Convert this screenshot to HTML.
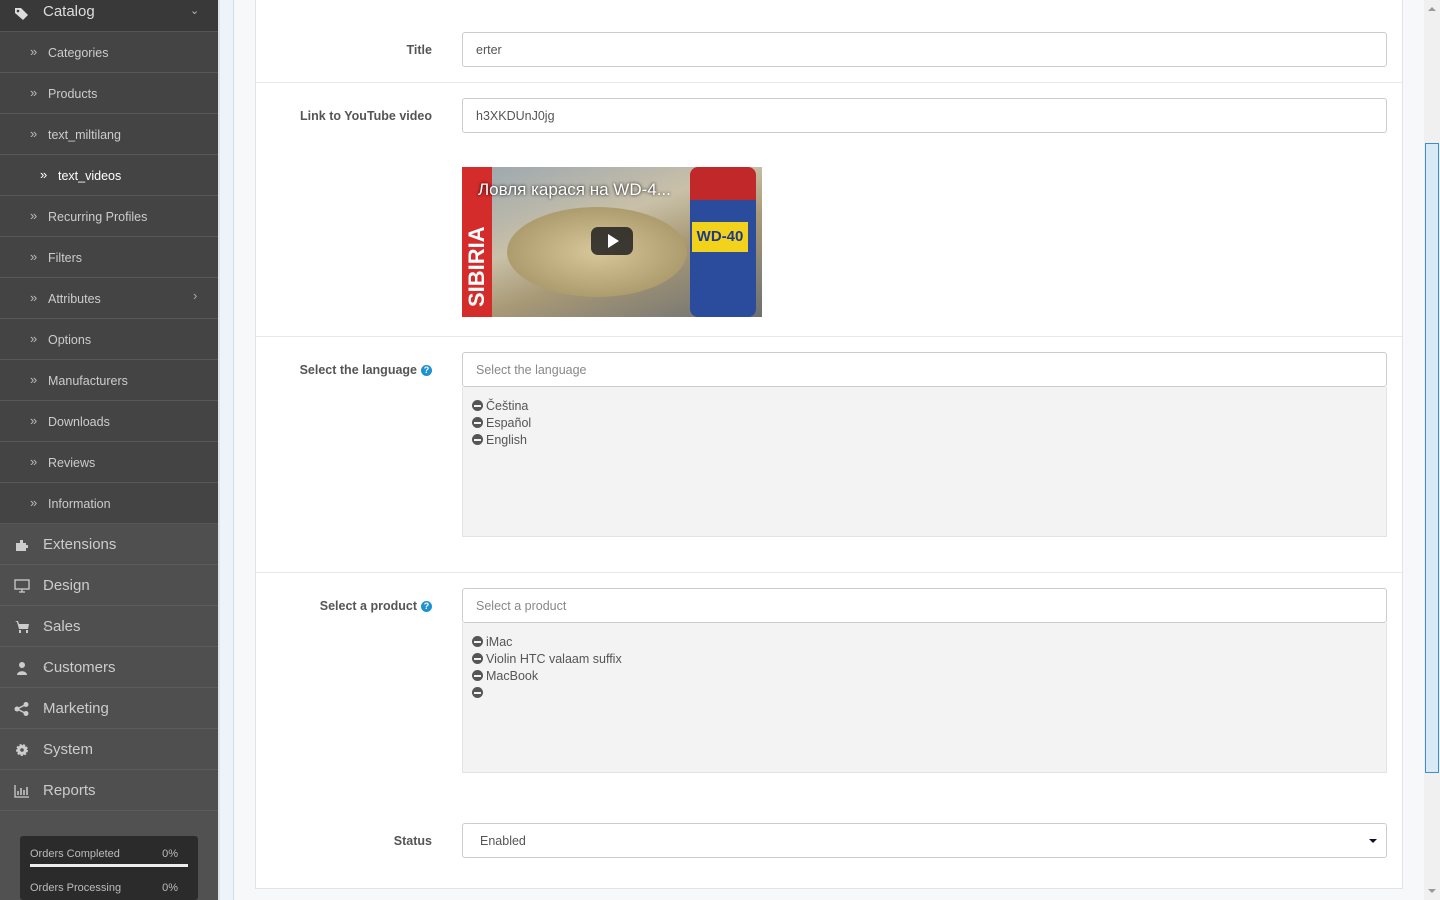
<!DOCTYPE html>
<html><head><meta charset="utf-8"><style>
*{margin:0;padding:0;box-sizing:border-box}
html,body{width:1440px;height:900px;overflow:hidden}
body{background:#f6f8fa;font-family:"Liberation Sans",sans-serif;position:relative}
#side{position:absolute;left:0;top:0;width:218px;height:900px;background:#515151;overflow:hidden}
.hd{height:32px;background:#393939;color:#ddd;font-size:15px;position:relative;border-bottom:1px solid #555}
.hd span{position:absolute;left:43px;top:3px}
.sub{height:41px;background:#444;border-bottom:1px solid #575757;color:#ccc;font-size:12.5px;position:relative}
.sub span{position:absolute;left:48px;top:14px}
.sub i{position:absolute;left:30px;top:12px;font-style:normal;font-size:13px;color:#bbb}
.sub.a span{left:58px;color:#fff}.sub.a i{left:40px;color:#fff}
.main{height:41px;background:#4f4f4f;border-bottom:1px solid #5c5c5c;color:#ccc;font-size:15px;position:relative}
.main span{position:absolute;left:43px;top:12px}
.chev{position:absolute;left:193px;top:12px;color:#aaa;font-size:13px}
.ic{position:absolute;left:14px;top:14px;width:16px;height:14px}
.box{position:absolute;left:20px;top:836px;width:178px;height:64px;background:#2b2b2b;border-radius:3px}
.box div{color:#bbb;font-size:11px;position:absolute;left:10px}
.box b{font-weight:normal;position:absolute;right:10px}
#strip{position:absolute;left:218px;top:0;width:16px;height:900px;background:#eef3f9;border-left:2px solid #dfe3e8;border-right:1px solid #d5dce4}
#panel{position:absolute;left:255px;top:0;width:1148px;height:889px;background:#fff;border:1px solid #e3e3e3;border-top:none}
.row{position:absolute;left:0;width:1146px;border-bottom:1px solid #e8e8e8}
.lab{position:absolute;right:970px;font-weight:bold;font-size:12.5px;color:#555;text-align:right;white-space:nowrap}
.inp{position:absolute;left:206px;width:925px;height:35px;border:1px solid #ccc;border-radius:3px;background:#fff;font-size:12.5px;color:#555;padding:10px 13px}
.ph{color:#888}
.well{position:absolute;left:206px;width:925px;background:#f3f3f3;border:1px solid #e3e3e3;border-top:none;font-size:12.5px;color:#555;padding:11px 9px;line-height:17px}
.m{display:inline-block;width:11px;height:11px;border-radius:50%;background:#555;position:relative;top:1px;margin-right:3px}
.m:after{content:"";position:absolute;left:2px;top:4.5px;width:7px;height:2px;background:#f3f3f3}
.q{display:inline-block;width:11px;height:11px;border-radius:50%;background:#1e91cf;color:#fff;font-size:9px;text-align:center;line-height:11px;margin-left:4px;vertical-align:1px}
#sb{position:absolute;left:1424px;top:0;width:16px;height:900px;background:#f0f0f0}
#thumb{position:absolute;left:1425px;top:143px;width:14px;height:630px;background:#d9eaf7;border:1px solid #3b8fd1;z-index:5}
</style></head><body>
<div id="side">
<div class="hd"><svg class="ic" style="top:7px" viewBox="0 0 16 14"><path d="M1 1h6l7 7-5 5-8-7z" fill="#ddd"/><circle cx="4" cy="4" r="1.3" fill="#393939"/></svg><span>Catalog</span><span style="left:190px;top:4px;font-size:11px;color:#bbb">&#8964;</span></div>
<div class="sub"><i>»</i><span>Categories</span></div>
<div class="sub"><i>»</i><span>Products</span></div>
<div class="sub"><i>»</i><span>text_miltilang</span></div>
<div class="sub a"><i>»</i><span>text_videos</span></div>
<div class="sub"><i>»</i><span>Recurring Profiles</span></div>
<div class="sub"><i>»</i><span>Filters</span></div>
<div class="sub"><i>»</i><span>Attributes</span><b class="chev" style="top:10px;font-weight:normal">›</b></div>
<div class="sub"><i>»</i><span>Options</span></div>
<div class="sub"><i>»</i><span>Manufacturers</span></div>
<div class="sub"><i>»</i><span>Downloads</span></div>
<div class="sub"><i>»</i><span>Reviews</span></div>
<div class="sub"><i>»</i><span>Information</span></div>
<div class="main"><svg class="ic" viewBox="0 0 16 14"><path d="M2 5h4V2h3v3h3v2h2v3h-2v3H2z" fill="#ccc"/></svg><span>Extensions</span><span class="chev">›</span></div>
<div class="main"><svg class="ic" viewBox="0 0 16 14"><rect x="1" y="1" width="14" height="9" fill="none" stroke="#ccc" stroke-width="1.3"/><path d="M5 13h6M8 10v3" stroke="#ccc" stroke-width="1.3"/></svg><span>Design</span><span class="chev">›</span></div>
<div class="main"><svg class="ic" viewBox="0 0 16 14"><path d="M1 1h3l1 3h10l-1 5H5L3 2" fill="#ccc"/><rect x="5" y="10" width="2" height="3" fill="#ccc"/><rect x="12" y="10" width="2" height="3" fill="#ccc"/></svg><span>Sales</span><span class="chev">›</span></div>
<div class="main"><svg class="ic" viewBox="0 0 16 14"><circle cx="8" cy="4" r="3" fill="#ccc"/><path d="M3 14c0-5 10-5 10 0z" fill="#ccc"/></svg><span>Customers</span><span class="chev">›</span></div>
<div class="main"><svg class="ic" viewBox="0 0 16 14"><circle cx="3" cy="7" r="2.5" fill="#ccc"/><circle cx="12" cy="2.5" r="2.5" fill="#ccc"/><circle cx="12" cy="11.5" r="2.5" fill="#ccc"/><path d="M3 7L12 2.5M3 7l9 4.5" stroke="#ccc" stroke-width="1.5"/></svg><span>Marketing</span><span class="chev">›</span></div>
<div class="main"><svg class="ic" viewBox="0 0 16 14"><circle cx="8" cy="7" r="5" fill="#ccc" stroke="#ccc" stroke-width="2" stroke-dasharray="2 1.5"/><circle cx="8" cy="7" r="1.8" fill="#4f4f4f"/></svg><span>System</span><span class="chev">›</span></div>
<div class="main"><svg class="ic" viewBox="0 0 16 14"><path d="M1 1v12h14" stroke="#ccc" fill="none" stroke-width="1.3"/><path d="M4 11V7M7 11V4M10 11V6M13 11V3" stroke="#ccc" stroke-width="1.5"/></svg><span>Reports</span><span class="chev">›</span></div>
<div class="box"><div style="top:12px;width:158px">Orders Completed<b>0%</b></div><div style="top:28px;width:158px;height:3px;background:#eee"></div><div style="top:46px;width:158px">Orders Processing<b>0%</b></div></div>
</div>
<div id="strip"></div>
<div id="panel">
<div class="row" style="top:0;height:83px"><div class="lab" style="top:43px">Title</div><div class="inp" style="top:32px">erter</div></div>
<div class="row" style="top:83px;height:254px"><div class="lab" style="top:26px">Link to YouTube video</div><div class="inp" style="top:15px">h3XKDUnJ0jg</div>
<div style="position:absolute;left:206px;top:84px;width:300px;height:150px;overflow:hidden;background:linear-gradient(160deg,#9aa6b0 0%,#c9c0a8 40%,#a99a76 60%,#6c6f72 100%)">
<div style="position:absolute;left:0;top:0;width:30px;height:150px;background:#d42b2b"></div>
<div style="position:absolute;left:2px;top:140px;transform:rotate(-90deg);transform-origin:0 0;color:#fff;font-weight:bold;font-size:22px">SIBIRIA</div>
<div style="position:absolute;left:45px;top:40px;width:180px;height:90px;border-radius:50%;background:radial-gradient(#d8c79a,#9b8a5b)"></div>
<div style="position:absolute;left:228px;top:0;width:66px;height:150px;background:linear-gradient(180deg,#c0282a 0 22%,#2b4c9c 22%);border-radius:8px"></div>
<div style="position:absolute;left:230px;top:55px;width:56px;height:30px;background:#f3d21c;color:#1d3a8a;font-weight:bold;font-size:15px;text-align:center;line-height:30px">WD-40</div>
<div style="position:absolute;left:16px;top:13px;color:#fff;font-size:17px;text-shadow:0 0 3px #000">Ловля карася на WD-4...</div>
<div style="position:absolute;left:129px;top:60px;width:42px;height:28px;background:rgba(33,33,33,.85);border-radius:7px"></div>
<div style="position:absolute;left:146px;top:67px;border-left:11px solid #fff;border-top:7px solid transparent;border-bottom:7px solid transparent"></div>
</div></div>
<div class="row" style="top:337px;height:236px"><div class="lab" style="top:26px">Select the language<span class="q">?</span></div><div class="inp ph" style="top:15px">Select the language</div>
<div class="well" style="top:50px;height:150px"><span class="m"></span>Čeština<br><span class="m"></span>Español<br><span class="m"></span>English</div></div>
<div class="row" style="top:573px;height:236px;border:none"><div class="lab" style="top:26px">Select a product<span class="q">?</span></div><div class="inp ph" style="top:15px">Select a product</div>
<div class="well" style="top:50px;height:150px"><span class="m"></span>iMac<br><span class="m"></span>Violin HTC valaam suffix<br><span class="m"></span>MacBook<br><span class="m"></span></div></div>
<div class="lab" style="top:834px">Status</div>
<div class="inp" style="top:823px;padding-left:17px">Enabled<span style="position:absolute;right:9px;top:15px;border-top:4px solid #112;border-left:4px solid transparent;border-right:4px solid transparent"></span></div>
</div>
<div id="sb"><div style="position:absolute;left:4px;top:7px;border-bottom:4px solid #999;border-left:4px solid transparent;border-right:4px solid transparent"></div><div style="position:absolute;left:4px;top:889px;border-top:4px solid #999;border-left:4px solid transparent;border-right:4px solid transparent"></div></div>
<div id="thumb"></div>
</body></html>
